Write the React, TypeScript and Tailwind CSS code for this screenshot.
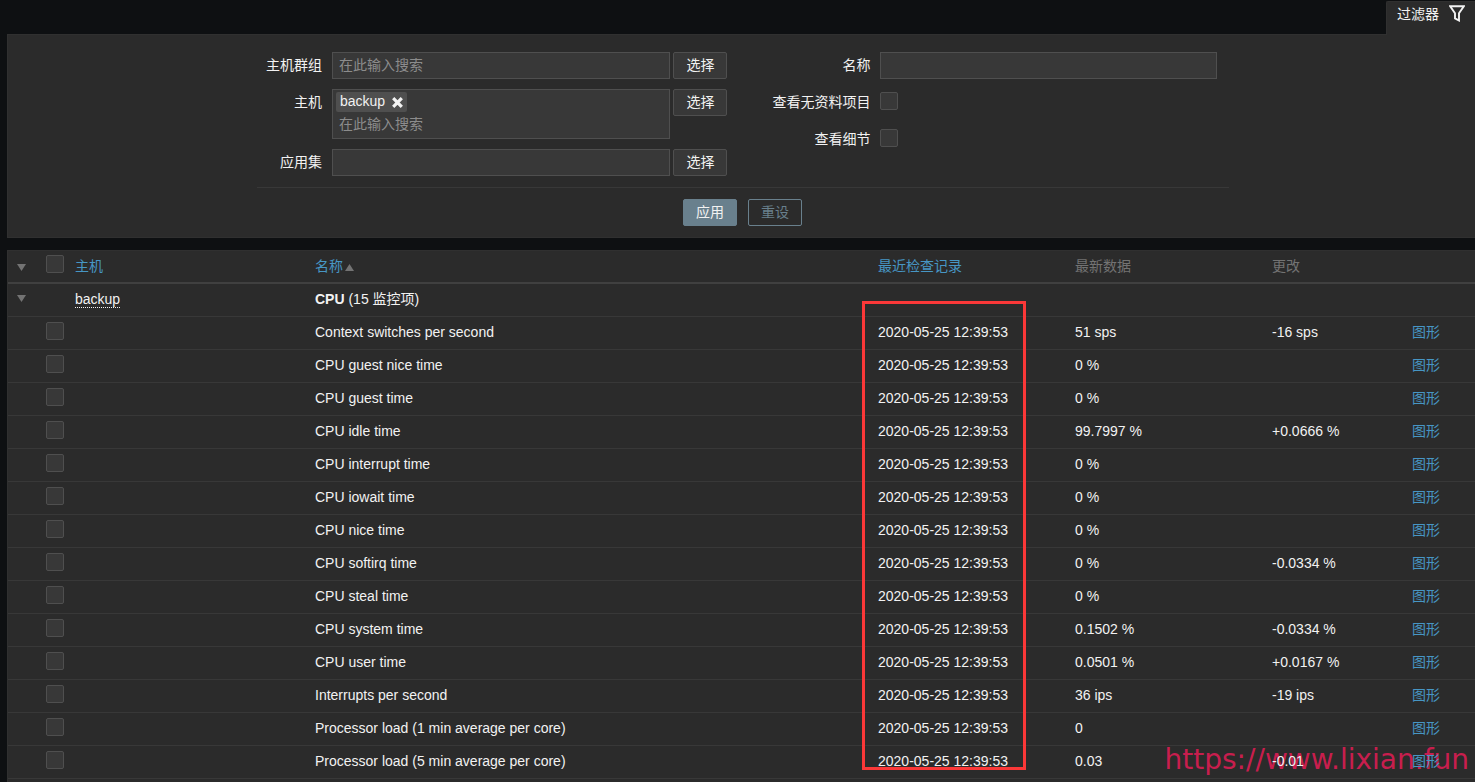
import type { ReactNode } from "react";
import clsx from "clsx";

type Item = {
  name: string;
  value: string;
  change?: string;
};

const LAST_CHECK = "2020-05-25 12:39:53";

const items: Item[] = [
  { name: "Context switches per second", value: "51 sps", change: "-16 sps" },
  { name: "CPU guest nice time", value: "0 %" },
  { name: "CPU guest time", value: "0 %" },
  { name: "CPU idle time", value: "99.7997 %", change: "+0.0666 %" },
  { name: "CPU interrupt time", value: "0 %" },
  { name: "CPU iowait time", value: "0 %" },
  { name: "CPU nice time", value: "0 %" },
  { name: "CPU softirq time", value: "0 %", change: "-0.0334 %" },
  { name: "CPU steal time", value: "0 %" },
  { name: "CPU system time", value: "0.1502 %", change: "-0.0334 %" },
  { name: "CPU user time", value: "0.0501 %", change: "+0.0167 %" },
  { name: "Interrupts per second", value: "36 ips", change: "-19 ips" },
  { name: "Processor load (1 min average per core)", value: "0" },
  { name: "Processor load (5 min average per core)", value: "0.03", change: "-0.01" },
];

const fieldClass = "border border-[#4f4f4f] bg-[#383838] outline-none";
const inputClass = "h-[27px] min-w-0 flex-1 px-1.5 pb-0.5 placeholder:text-[#8c8c8c]";
const buttonClass = "h-[27px] w-[54px] shrink-0 rounded-xs border pb-0.5";

function Checkbox({ id, label }: { id?: string; label?: string }) {
  return (
    <input
      type="checkbox"
      id={id}
      aria-label={label}
      className="block size-[18px] shrink-0 appearance-none rounded-xs border border-[#4f4f4f] bg-[#383838] checked:bg-[#4796c4]"
    />
  );
}

function SelectButton() {
  return (
    <button type="button" className={clsx(buttonClass, "ml-[3px] border-[#4f4f4f] bg-[#383838]")}>
      选择
    </button>
  );
}

function FilterRow({
  label,
  htmlFor,
  wide,
  children,
}: {
  label: string;
  htmlFor: string;
  wide?: boolean;
  children: ReactNode;
}) {
  return (
    <div className="flex min-h-[27px] items-start">
      <label
        htmlFor={htmlFor}
        className={clsx(
          "mr-2.5 shrink-0 text-right leading-[27px] whitespace-nowrap",
          wide ? "w-[143px]" : "w-[65px]",
        )}
      >
        {label}
      </label>
      {children}
    </div>
  );
}

function Triangle({ up }: { up?: boolean }) {
  return (
    <svg width="9" height="7" viewBox="0 0 9 7" fill="#737373" className="inline-block">
      <path d={up ? "M0 7 4.5 0 9 7z" : "M0 0h9L4.5 7z"} />
    </svg>
  );
}

function Filter() {
  return (
    <form
      onSubmit={(e) => e.preventDefault()}
      className="border border-r-0 border-[#303030] bg-[#2b2b2b] pt-[17px] pb-[11px] pl-[3px]"
    >
      <div className="mx-auto max-w-[972px]">
        <div className="grid grid-cols-[49%_51%] border-b border-[#383838] pr-3 pb-[11px]">
          {/* Left column */}
          <div className="flex flex-col gap-2.5">
            <FilterRow label="主机群组" htmlFor="groups">
              <input
                id="groups"
                type="text"
                placeholder="在此输入搜索"
                className={clsx(fieldClass, inputClass)}
              />
              <SelectButton />
            </FilterRow>
            <FilterRow label="主机" htmlFor="hosts">
              <div className={clsx(fieldClass, "min-w-0 flex-1 px-[3px] pt-0.5 pb-0.5")}>
                <span className="flex h-5 w-fit items-center gap-[7px] rounded-xs bg-[#4f4f4f] px-1 pb-0.5">
                  backup
                  <button type="button" aria-label="backup" className="pt-0.5">
                    <svg width="11" height="11" viewBox="0 0 11 11" stroke="#f2f2f2" strokeWidth="3.2">
                      <path d="M1.2 1.2 9.8 9.8M9.8 1.2 1.2 9.8" />
                    </svg>
                  </button>
                </span>
                <input
                  id="hosts"
                  type="text"
                  placeholder="在此输入搜索"
                  className="block h-6 w-full bg-transparent px-[3px] outline-none placeholder:text-[#8c8c8c]"
                />
              </div>
              <SelectButton />
            </FilterRow>
            <FilterRow label="应用集" htmlFor="application">
              <input id="application" type="text" className={clsx(fieldClass, inputClass)} />
              <SelectButton />
            </FilterRow>
          </div>

          {/* Right column */}
          <div className="flex flex-col gap-2.5">
            <FilterRow label="名称" htmlFor="name" wide>
              <input id="name" type="text" className={clsx(fieldClass, inputClass)} />
            </FilterRow>
            <FilterRow label="查看无资料项目" htmlFor="no-data" wide>
              <div className="flex h-6 items-center">
                <Checkbox id="no-data" />
              </div>
            </FilterRow>
            <FilterRow label="查看细节" htmlFor="details" wide>
              <div className="flex h-6 items-center">
                <Checkbox id="details" />
              </div>
            </FilterRow>
          </div>
        </div>

        <div className="flex justify-center gap-[11px] pt-[11px] pr-px">
          <button type="submit" className={clsx(buttonClass, "border-[#69808d] bg-[#69808d]")}>
            应用
          </button>
          <button type="reset" className={clsx(buttonClass, "border-[#69808d] text-[#69808d]")}>
            重设
          </button>
        </div>
      </div>
    </form>
  );
}

function LatestData() {
  return (
    <table className="relative z-10 w-full table-fixed border-separate border-spacing-0 text-left [&_td]:border-b [&_td]:border-[#383838] [&_td]:px-[5px] [&_th]:border-b-2 [&_th]:border-[#404040] [&_th]:px-[5px] [&_th]:font-normal">
      <colgroup>
        <col className="w-[33px]" />
        <col className="w-[29px]" />
        <col className="w-[240px]" />
        <col />
        <col className="w-[197px]" />
        <col className="w-[197px]" />
        <col className="w-[140px]" />
        <col className="w-[68px]" />
      </colgroup>
      <thead>
        <tr className="h-[33px] text-[#737373]">
          <th>
            <button type="button" aria-label="全部" className="ml-1 block">
              <Triangle />
            </button>
          </th>
          <th className="pt-1 align-top">
            <Checkbox label="全部" />
          </th>
          <th className="pb-0.5">
            <a href="#host" className="text-[#4796c4]">主机</a>
          </th>
          <th className="pb-0.5">
            <a href="#name" className="flex items-center gap-0.5 text-[#4796c4]">
              名称
              <span className="pt-0.5 leading-none"><Triangle up /></span>
            </a>
          </th>
          <th className="pb-0.5">
            <a href="#lastcheck" className="text-[#4796c4]">最近检查记录</a>
          </th>
          <th className="pb-0.5">最新数据</th>
          <th className="pb-0.5">更改</th>
          <th />
        </tr>
      </thead>
      <tbody>
        <tr className="h-[33px]">
          <td className="pb-1.5">
            <button type="button" aria-label="CPU" className="ml-1 block">
              <Triangle />
            </button>
          </td>
          <td />
          <td className="pb-0.5">
            <a href="#backup" className="inline-block border-b border-dotted border-[#f2f2f2] leading-4">
              backup
            </a>
          </td>
          <td colSpan={5} className="pb-0.5">
            <b>CPU</b> (15 监控项)
          </td>
        </tr>
        {items.map((item, i) => (
          <tr key={item.name} className="h-[33px]">
            <td />
            <td className="pt-[5px] align-top">
              <Checkbox label={item.name} />
            </td>
            <td />
            <td className="pb-0.5">{item.name}</td>
            <td className="relative pb-0.5">
              {LAST_CHECK}
              {/* Highlight around the last check column */}
              {i === 0 && (
                <div className="pointer-events-none absolute -top-4 -left-[11px] z-10 h-[469px] w-[164px] border-3 border-[#fb3838]" />
              )}
            </td>
            <td className="pb-0.5">{item.value}</td>
            <td className="pb-0.5">{item.change}</td>
            <td className="pb-0.5">
              <a href="#graph" className="text-[#4796c4]">图形</a>
            </td>
          </tr>
        ))}
      </tbody>
    </table>
  );
}

export default function App() {
  return (
    <div className="relative flex min-h-screen flex-col bg-[#0e1012] pl-[7px] font-['Liberation_Sans','Noto_Sans_CJK_SC',sans-serif] text-[14px] leading-5 text-[#f2f2f2]">
      <div className="flex justify-end pt-px">
        <button
          type="button"
          className="relative z-10 -mb-px flex h-[34px] items-center gap-2.5 rounded-tl-xs border-t border-l border-[#303030] bg-[#2b2b2b] px-2.5 pb-2.5"
        >
          过滤器
          <svg width="16" height="17" viewBox="0 0 16 17" fill="none" stroke="#f2f2f2" strokeWidth="1.9">
            <path d="M1.2 1.2h13.6L10 8.2v7.3L6 13.4V8.2z" />
          </svg>
        </button>
      </div>
      <Filter />
      <main className="mt-3 flex-1 border-t border-l border-[#303030] bg-[#2b2b2b]">
        <LatestData />
      </main>
      <div className="pointer-events-none absolute right-1.5 bottom-0 font-['DejaVu_Sans',sans-serif] text-[28px] leading-[44px] text-[#c81e4e]">
        https://www.lixian.fun
      </div>
    </div>
  );
}
